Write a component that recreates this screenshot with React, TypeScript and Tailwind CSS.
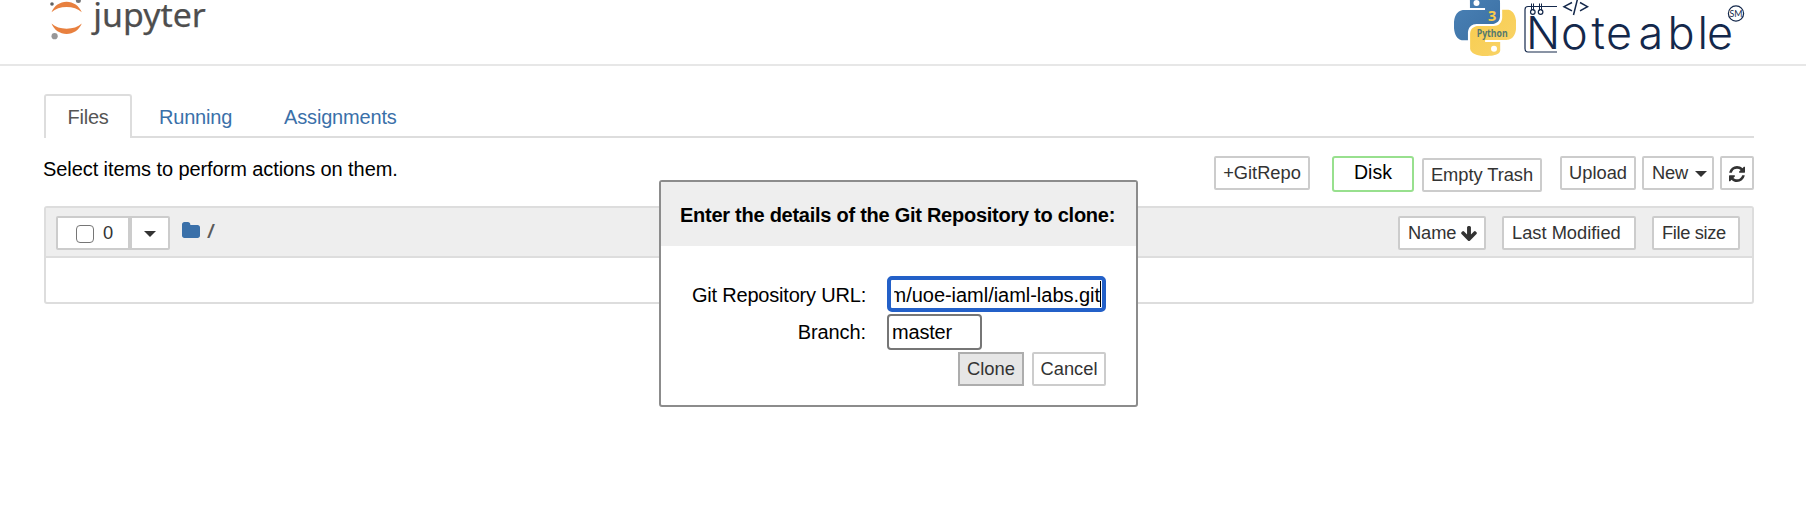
import type { ReactNode } from "react";

const BTN =
  "flex h-[34px] shrink-0 items-center border-2 border-[#ccc] rounded-[2px] bg-white pt-[1px] text-[18.3px] leading-none text-[#333] whitespace-nowrap";

function Button({ className, children }: { className: string; children: ReactNode }) {
  return <button className={`${BTN} ${className}`}>{children}</button>;
}

function Caret() {
  return (
    <svg width="12" height="6" viewBox="0 0 12 6" fill="#333">
      <path d="M0 0h12L6 6z" />
    </svg>
  );
}

function JupyterLogo() {
  return (
    <svg width="170" height="48" viewBox="40 0 170 48" className="block overflow-visible">
      <path d="M51.500 12.200C54 5.800 60 1.700 66.600 1.700S79.200 5.800 81.800 12.200C78 8.800 72.600 7 66.600 7S55.300 8.800 51.500 12.200z" fill="#e8803f" />
      <path d="M51.500 23.600C54 30 60 34.100 66.600 34.100S79.200 30 81.800 23.600C78 27 72.600 28.800 66.600 28.800S55.300 27 51.500 23.600z" fill="#e8803f" />
      <circle cx="52" cy="4" r="1.8" fill="#616262" />
      <circle cx="78.400" cy="0.500" r="2.500" fill="#767677" />
      <circle cx="54.600" cy="36.200" r="3.100" fill="#989798" />
      <text x="93.300" y="26.600" fontSize="33.500" textLength="112.500" lengthAdjust="spacingAndGlyphs" fill="#4e4e4e" stroke="#4e4e4e" strokeWidth="0.250" fontFamily="'Noto Sans', sans-serif">
        jupyter
      </text>
    </svg>
  );
}

function PythonLogo() {
  return (
    <svg width="62" height="56" viewBox="0 6 62 56" className="block">
      <defs>
        <linearGradient id="pyBlue" x1="0" y1="0" x2="1" y2="1">
          <stop offset="0" stopColor="#4b82b6" />
          <stop offset="1" stopColor="#3a6fa3" />
        </linearGradient>
        <linearGradient id="pyYellow" x1="0" y1="0" x2="1" y2="1">
          <stop offset="0" stopColor="#f8cc4c" />
          <stop offset="1" stopColor="#f9d46a" />
        </linearGradient>
      </defs>
      <g transform="scale(2.583)">
        <path
          fill="url(#pyBlue)"
          d="M14.25.18l.9.2.73.26.59.3.45.32.34.34.25.34.16.33.1.3.04.26.02.2-.01.13V8.5l-.05.63-.13.55-.21.46-.26.38-.3.31-.33.25-.35.19-.35.14-.33.1-.3.07-.26.04-.21.02H8.77l-.69.05-.59.14-.5.22-.41.27-.33.32-.27.35-.2.36-.15.37-.1.35-.07.32-.04.27-.02.21v3.06H3.17l-.21-.03-.28-.07-.32-.12-.35-.18-.36-.26-.36-.36-.35-.46-.32-.59-.28-.73-.21-.88-.14-1.05-.05-1.23.06-1.22.16-1.04.24-.87.32-.71.36-.57.4-.44.42-.33.42-.24.4-.16.36-.1.32-.05.24-.01h.16l.06.01h8.16v-.83H6.18l-.01-2.75-.02-.37.05-.34.11-.31.17-.28.25-.26.31-.23.38-.2.44-.18.51-.15.58-.12.64-.1.71-.06.77-.04.84-.02 1.27.05z"
        />
        <path
          fill="url(#pyYellow)"
          d="M21.1 6.11l.28.06.32.12.35.18.36.27.36.35.35.47.32.59.28.73.21.88.14 1.04.05 1.23-.06 1.23-.16 1.04-.24.86-.32.71-.36.57-.4.45-.42.33-.42.24-.4.16-.36.09-.32.05-.24.02-.16-.01h-8.22v.82h5.84l.01 2.76.02.36-.05.34-.11.31-.17.29-.25.25-.31.24-.38.2-.44.17-.51.15-.58.13-.64.09-.71.07-.77.04-.84.01-1.27-.04-1.07-.14-.9-.2-.73-.25-.59-.3-.45-.33-.34-.34-.25-.34-.16-.33-.1-.3-.04-.25-.02-.2.01-.13v-5.34l.05-.64.13-.54.21-.46.26-.38.3-.32.33-.24.35-.2.35-.14.33-.1.3-.06.26-.04.21-.02.13-.01h5.84l.69-.05.59-.14.5-.21.41-.28.33-.32.27-.35.2-.36.15-.36.1-.35.07-.32.04-.28.02-.21V6.07h2.09z"
        />
      </g>
      <circle cx="22.500" cy="9" r="3" fill="#fff" />
      <circle cx="40" cy="54.700" r="3" fill="#fff" />
      <text x="34" y="27" fontSize="14.500" fontWeight="700" fill="#f8cc4c" fontFamily="'Open Sans', sans-serif">3</text>
      <text x="22.700" y="42.600" fontSize="10" fontWeight="700" textLength="31" lengthAdjust="spacingAndGlyphs" fill="#54796e" fontFamily="'Open Sans', sans-serif">Python</text>
    </svg>
  );
}

function NoteableLogo() {
  return (
    <svg width="222" height="56" viewBox="1523 0 222 56" className="block overflow-visible" fill="none" stroke="#14284b">
      <path d="M1557 6.500h-29q-3 0-3 3v39q0 3.500 3 3.500h29" strokeWidth="1.200" />
      <path d="M1531.500 3.500v7M1533.500 3.500v7M1539.500 3.500v7M1541.500 3.500v7" strokeWidth="1" />
      <circle cx="1532.800" cy="12" r="2.300" strokeWidth="1.200" />
      <circle cx="1540.600" cy="12" r="2.300" strokeWidth="1.200" />
      <path d="M1572 2.500l-8 4.200 8 4.200M1580 2.500l7.500 4.200-7.500 4.200M1577.500-1l-4 16" strokeWidth="1.500" />
      <circle cx="1736" cy="13.500" r="7.600" strokeWidth="1.200" />
      <g fill="#14284b" stroke="none">
        <text x="1729.500" y="17" fontSize="9" textLength="13" lengthAdjust="spacingAndGlyphs" fontFamily="Lato, sans-serif">SM</text>
        <text
          x="1526 1561 1591.500 1606 1638.500 1667.500 1697.500 1707"
          y="48.700"
          fontSize="45"
          fontWeight="350"
          fontFamily="Inter, sans-serif"
        >
          Noteable
        </text>
      </g>
    </svg>
  );
}

function CloneDialog() {
  return (
    <div className="absolute top-[180px] left-[659px] h-[227px] w-[479px] rounded-[3px] border-2 border-[#8c8c8c] bg-white">
      <div className="flex h-[64px] items-center bg-[#eee] pt-[2px] pl-[19px] text-[20px] font-bold tracking-[-0.26px] whitespace-nowrap">
        Enter the details of the Git Repository to clone:
      </div>
      <div className="flex flex-col gap-[2px] pt-[30px] pr-[30px]">
        <div className="flex h-[36px] items-center justify-end">
          <label className="mr-[21px] pt-[1px] text-[20px] tracking-[-0.2px]">Git Repository URL:</label>
          <div className="flex h-[36px] w-[219px] items-center rounded-[5px] border-[4px] border-[#2360c8] pr-[1px] pl-[3px]">
            <div className="flex h-[26px] w-full items-center justify-end overflow-hidden border-r border-black pt-[1px] text-[20px] tracking-[-0.03px] whitespace-nowrap">
              m/uoe-iaml/iaml-labs.git
            </div>
          </div>
        </div>
        <div className="flex h-[36px] items-center justify-end">
          <label className="mr-[21px] text-[20px] tracking-[-0.1px]">Branch:</label>
          <div className="mr-[124px] flex h-[36px] w-[95px] items-center rounded-[4px] border-2 border-[#767676] pl-[3px] text-[20px] tracking-[-0.2px]">
            master
          </div>
        </div>
        <div className="flex justify-end gap-2">
          <button className="flex h-[34px] w-[66px] items-center justify-center border-2 border-[#adadad] bg-[#e6e6e6] text-[18.4px] text-[#333]">
            Clone
          </button>
          <Button className="w-[74px] justify-center">Cancel</Button>
        </div>
      </div>
    </div>
  );
}

export default function App() {
  return (
    <div className="relative h-[528px] w-[1806px] overflow-hidden bg-white font-['Liberation_Sans',Arial,sans-serif] text-black">
      <header className="flex h-[66px] items-start border-b-2 border-[#e7e7e7] pr-[61px] pl-[40px]">
        <JupyterLogo />
        <div className="ml-auto flex gap-[7px]">
          <PythonLogo />
          <NoteableLogo />
        </div>
      </header>

      <main className="ml-[44px] w-[1710px] pt-[28px]">
        <nav className="flex h-[44px] items-start border-b-2 border-[#ddd] text-[20px]">
          <a className="flex h-[44px] w-[88px] items-center justify-center rounded-t-[3px] border-2 border-b-0 border-[#ddd] bg-white tracking-[-0.2px] text-[#555]">
            Files
          </a>
          <a className="ml-[27px] flex h-[46px] items-center tracking-[-0.2px] text-[#3a70a9]">Running</a>
          <a className="ml-[52px] flex h-[46px] items-center tracking-[-0.18px] text-[#3a70a9]">Assignments</a>
        </nav>

        <div className="flex h-[68px] items-start pt-[18px]">
          <p className="-ml-[1px] pt-[1px] text-[20px] leading-[24px] tracking-[-0.08px]">
            Select items to perform actions on them.
          </p>
          <div className="ml-auto flex items-start">
            <Button className="w-[96px] justify-center">+GitRepo</Button>
            <button className="ml-[22px] flex h-[36px] w-[82px] items-center justify-center rounded-[3px] border-2 border-[#98e08e] pb-[2px] text-[19.5px]">
              Disk
            </button>
            <Button className="mt-[2px] ml-[8px] w-[120px] justify-center tracking-[-0.05px]">Empty Trash</Button>
            <Button className="ml-[18px] w-[76px] justify-center">Upload</Button>
            <Button className="ml-[6px] w-[72px] gap-[7px] pl-[8px] tracking-[-0.2px]">
              New
              <Caret />
            </Button>
            <Button className="ml-[6px] w-[34px] justify-center">
              <svg width="16" height="16" viewBox="0 0 1536 1536" fill="#333">
                <path d="M1511 928q0 5-1 7-64 268-268 434.500T764 1536q-146 0-282.500-55T238 1324l-129 129q-19 19-45 19t-45-19-19-45V960q0-26 19-45t45-19h448q26 0 45 19t19 45-19 45l-137 137q71 66 161 102t187 36q134 0 250-65t186-179q11-17 53-117 8-23 30-23h192q13 0 22.500 9.500t9.500 22.500zm25-800v448q0 26-19 45t-45 19h-448q-26 0-45-19t-19-45 19-45l138-138Q969 256 768 256q-134 0-250 65T332 500q-11 17-53 117-8 23-30 23H50q-13 0-22.500-9.500T18 608v-7q65-268 270-434.500T768 0q146 0 284 55.500T1297 212l130-129q19-19 45-19t45 19 19 45z" />
              </svg>
            </Button>
          </div>
        </div>

        <section className="h-[98px] rounded-[3px] border-2 border-[#ddd]">
          <div className="flex h-[50px] items-start border-b-2 border-[#ddd] bg-[#eee] pt-[8px] pr-[12px] pl-[10px]">
            <Button className="w-[74px] rounded-r-none pl-[18px]">
              <span className="h-[18px] w-[18px] rounded-[4px] border border-[#767676] bg-white" />
              <span className="ml-[9px]">0</span>
            </Button>
            <Button className="w-[40px] justify-center rounded-l-none">
              <Caret />
            </Button>
            <div className="flex h-[28px] items-center gap-[7px] pl-[12px]">
              <svg width="18" height="16" viewBox="0 128 1664 1408" preserveAspectRatio="none" fill="#3a70a9">
                <path d="M1664 608v704q0 92-66 158t-158 66H224q-92 0-158-66T0 1312V352q0-92 66-158t158-66h320q92 0 158 66t66 158v32h672q92 0 158 66t66 158z" />
              </svg>
              <span className="font-['Open_Sans',sans-serif] text-[20.5px] leading-none font-semibold text-[#5a5a5a]">/</span>
            </div>
            <div className="ml-auto flex">
              <Button className="w-[88px] gap-[5px] pl-[8px] tracking-[-0.1px]">
                Name
                <svg width="16" height="15" viewBox="53 128 1558 1483" fill="#333">
                  <path d="M1611 832q0 53-37 90l-651 652q-39 37-91 37-53 0-90-37L91 922q-38-36-38-90 0-53 38-91l74-75q39-37 91-37 53 0 90 37l294 294V256q0-52 38-90t90-38h128q52 0 90 38t38 90v704l294-294q37-37 90-37 52 0 91 37l75 75q37 39 37 91z" />
                </svg>
              </Button>
              <Button className="ml-[16px] w-[134px] pl-[8px]">Last Modified</Button>
              <Button className="ml-[16px] w-[88px] pl-[8px] tracking-[-0.35px]">File size</Button>
            </div>
          </div>
        </section>
      </main>

      <CloneDialog />
    </div>
  );
}
